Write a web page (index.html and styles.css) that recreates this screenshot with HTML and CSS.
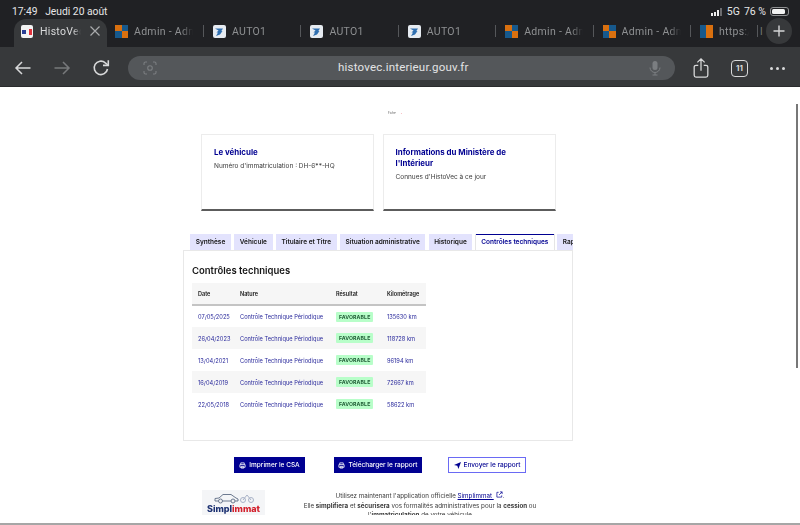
FILE: index.html
```html
<!DOCTYPE html>
<html lang="fr">
<head>
    <meta charset="UTF-8">
    <meta name="viewport" content="width=device-width, initial-scale=1.0">
    <title>HistoVec</title>
    <link rel="stylesheet" href="styles.css">
</head>
<body>
    <!-- Barre d'état -->
    <div class="status-bar">
        <span class="status-time">17:49</span>
        <span class="status-date">Jeudi 20 août</span>
        <div class="status-right">
            <div class="signal"><i></i><i></i><i></i><i class="off"></i></div>
            <span>5G</span>
            <span>76 %</span>
            <div class="battery"><div class="battery-level"></div></div>
        </div>
    </div>

    <!-- Onglets -->
    <div class="tab-strip">
        <div class="browser-tab active">
            <div class="fav fav-fr"><i></i><i></i></div>
            <span class="tab-title">HistoVec</span>
            <svg class="tab-close" width="12" height="12" viewBox="0 0 12 12"><path d="M1.5 1.5l9 9M10.5 1.5l-9 9" stroke="#a9abad" stroke-width="1.2" fill="none"/></svg>
        </div>
        <div class="browser-tab">
            <div class="fav fav-admin"><i></i><i></i><i></i><i></i></div>
            <span class="tab-title">Admin - Adm</span>
        </div>
        <div class="browser-tab sep">
            <div class="fav fav-auto"><svg width="13" height="13" viewBox="0 0 13 13"><path d="M2 3.500h8L8 6.500H5.500L9.500 6 7 9.500 3 11l2-3.500H3.500L5.500 5.500z" fill="#2f6fb0"/></svg></div>
            <span class="tab-title">AUTO1</span>
        </div>
        <div class="browser-tab sep">
            <div class="fav fav-auto"><svg width="13" height="13" viewBox="0 0 13 13"><path d="M2 3.500h8L8 6.500H5.500L9.500 6 7 9.500 3 11l2-3.500H3.500L5.500 5.500z" fill="#2f6fb0"/></svg></div>
            <span class="tab-title">AUTO1</span>
        </div>
        <div class="browser-tab sep">
            <div class="fav fav-auto"><svg width="13" height="13" viewBox="0 0 13 13"><path d="M2 3.500h8L8 6.500H5.500L9.500 6 7 9.500 3 11l2-3.500H3.500L5.500 5.500z" fill="#2f6fb0"/></svg></div>
            <span class="tab-title">AUTO1</span>
        </div>
        <div class="browser-tab sep">
            <div class="fav fav-admin"><i></i><i></i><i></i><i></i></div>
            <span class="tab-title">Admin - Adm</span>
        </div>
        <div class="browser-tab sep">
            <div class="fav fav-admin"><i></i><i></i><i></i><i></i></div>
            <span class="tab-title">Admin - Adm</span>
        </div>
        <div class="browser-tab sep tab-small">
            <div class="fav fav-https"><i></i><i></i></div>
            <span class="tab-title">https:/</span>
        </div>
        <div class="tab-rest"><span>I</span></div>
        <div class="tab-new">
            <svg width="12" height="12" viewBox="0 0 12 12"><path d="M6 .5v11M.5 6h11" stroke="#d4d5d6" stroke-width="1.4"/></svg>
        </div>
    </div>

    <!-- Barre d'outils -->
    <div class="toolbar">
        <svg class="tool-back" width="18" height="16" viewBox="0 0 18 16"><path d="M16.500 8H2M8 2L2 8l6 6" stroke="#d8d9da" stroke-width="1.500" fill="none"/></svg>
        <svg class="tool-forward" width="18" height="16" viewBox="0 0 18 16"><path d="M1.500 8H16M10 2l6 6-6 6" stroke="#77797b" stroke-width="1.500" fill="none"/></svg>
        <svg class="tool-reload" width="18" height="18" viewBox="0 0 18 18"><path d="M15.500 10a6.700 6.700 0 1 1-2.200-6.200L16 6" stroke="#d8d9da" stroke-width="1.600" fill="none"/><path d="M16.300 1.200V6.400H11" stroke="#d8d9da" stroke-width="1.600" fill="none"/></svg>
        <div class="url-bar">
            <svg class="url-lens" width="14" height="14" viewBox="0 0 14 14"><path d="M1 4V2.500A1.500 1.500 0 0 1 2.500 1H4M10 1h1.500A1.500 1.500 0 0 1 13 2.500V4M13 10v1.500a1.500 1.500 0 0 1-1.500 1.500H10M4 13H2.500A1.500 1.500 0 0 1 1 11.500V10" stroke="#7b7e81" stroke-width="1.100" fill="none"/><circle cx="7" cy="7" r="2.300" stroke="#7b7e81" stroke-width="1.100" fill="none"/></svg>
            <span class="url-text">histovec.interieur.gouv.fr</span>
            <svg class="url-mic" width="12" height="16" viewBox="0 0 12 16"><rect x="3.500" y="1" width="5" height="9" rx="2.500" fill="#7b7e81"/><path d="M1 7.500a5 5 0 0 0 10 0M6 12.500V15M3.500 15h5" stroke="#7b7e81" stroke-width="1" fill="none"/></svg>
        </div>
        <svg class="tool-share" width="16" height="20" viewBox="0 0 17 22"><path d="M5.500 8H3a2 2 0 0 0-2 2v9a2 2 0 0 0 2 2h11a2 2 0 0 0 2-2v-9a2 2 0 0 0-2-2h-2.500M8.500 14V1M4.500 4.800L8.500 1l4 3.800" stroke="#d8d9da" stroke-width="1.400" fill="none"/></svg>
        <div class="tool-count">11</div>
        <div class="tool-more"><i></i><i></i><i></i></div>
    </div>

    <!-- Page -->
    <div class="page">
        <div class="page-top"><span class="cut-text">Fiche</span><span class="cut-red">-</span></div>

        <div class="cards">
            <div class="card">
                <h2>Le véhicule</h2>
                <p>Numéro d'immatriculation : DH-6**-HQ</p>
            </div>
            <div class="card">
                <h2>Informations du Ministère de l'Intérieur</h2>
                <p>Connues d'HistoVec à ce jour</p>
            </div>
        </div>

        <div class="panel-wrap">
            <div class="tabs">
                <div class="tab">Synthèse</div>
                <div class="tab">Véhicule</div>
                <div class="tab">Titulaire et Titre</div>
                <div class="tab">Situation administrative</div>
                <div class="tab">Historique</div>
                <div class="tab tab-on">Contrôles techniques</div>
                <div class="tab">Rapport</div>
            </div>
            <div class="panel">
                <h3>Contrôles techniques</h3>
                <table>
                    <thead>
                        <tr><th class="col-date">Date</th><th class="col-nature">Nature</th><th class="col-res">Résultat</th><th>Kilométrage</th></tr>
                    </thead>
                    <tbody>
                        <tr><td>07/05/2025</td><td>Contrôle Technique Périodique</td><td><span class="badge">FAVORABLE</span></td><td>135630 km</td></tr>
                        <tr><td>26/04/2023</td><td>Contrôle Technique Périodique</td><td><span class="badge">FAVORABLE</span></td><td>118728 km</td></tr>
                        <tr><td>13/04/2021</td><td>Contrôle Technique Périodique</td><td><span class="badge">FAVORABLE</span></td><td>96194 km</td></tr>
                        <tr><td>16/04/2019</td><td>Contrôle Technique Périodique</td><td><span class="badge">FAVORABLE</span></td><td>72667 km</td></tr>
                        <tr><td>22/05/2018</td><td>Contrôle Technique Périodique</td><td><span class="badge">FAVORABLE</span></td><td>58622 km</td></tr>
                    </tbody>
                </table>
            </div>
        </div>

        <div class="actions">
            <div class="btn btn-imprimer"><svg width="7" height="7" viewBox="0 0 8 8"><path d="M2 3V1h4v2M1 3h6v3H1zM2.500 5h3v2h-3z" fill="none" stroke="#fff" stroke-width=".9"/></svg>Imprimer le CSA</div>
            <div class="btn btn-rapport"><svg width="7" height="7" viewBox="0 0 8 8"><path d="M2 3V1h4v2M1 3h6v3H1zM2.500 5h3v2h-3z" fill="none" stroke="#fff" stroke-width=".9"/></svg>Télécharger le rapport</div>
            <div class="btn btn-line"><svg width="7" height="7" viewBox="0 0 8 8"><path d="M0 3.500L8 0 5 8 3.800 4.300z" fill="#000091"/></svg>Envoyer le rapport</div>
        </div>

        <div class="promo">
            <div class="promo-logo">
                <svg width="40" height="12" viewBox="0 0 40 12"><path d="M1 9V6.500L5 6l4-3.500h8L22 6l2 1v2z" fill="none" stroke="#6d7a90" stroke-width="1"/><circle cx="6.500" cy="9" r="2" fill="#f0f0f2" stroke="#6d7a90"/><circle cx="19" cy="9" r="2" fill="#f0f0f2" stroke="#6d7a90"/><circle cx="29" cy="8" r="2.500" fill="none" stroke="#a9b3c8"/><circle cx="37" cy="8" r="2.500" fill="none" stroke="#a9b3c8"/><path d="M29 8l4-5 4 5" fill="none" stroke="#a9b3c8"/></svg>
                <div class="promo-name">Simpl<span>immat</span></div>
            </div>
            <div class="promo-text">
                <p>Utilisez maintenant l'application officielle <a>Simplimmat <svg width="7" height="7" viewBox="0 0 8 8"><path d="M3 1.500H1v5.500h5.500V5M4.500 1H7v2.500M7 1L3.500 4.500" fill="none" stroke="#000091" stroke-width=".8"/></svg></a>.</p>
                <p>Elle <b>simplifiera</b> et <b>sécurisera</b> vos formalités administratives pour la <b>cession</b> ou</p>
                <p>l'<b>immatriculation</b> de votre véhicule</p>
            </div>
        </div>

        <div class="scroll-thumb"></div>
        <div class="page-edge"></div>
    </div>
</body>
</html>
```

FILE: styles.css
```css
* {
    margin: 0;
    padding: 0;
    box-sizing: border-box;
}

html, body {
    width: 800px;
    height: 525px;
    overflow: hidden;
}

body {
    font-family: Inter, "Liberation Sans", sans-serif;
    background: #fff;
    display: flex;
    flex-direction: column;
}

/* Barre d'état */
.status-bar {
    height: 19px;
    flex: none;
    background: #202124;
    color: #e6e6e7;
    font-family: Roboto, sans-serif;
    font-size: 10.300px;
    display: flex;
    align-items: flex-end;
    padding: 0 11px 0 12px;
    line-height: 15px;
}

.status-date {
    margin-left: 7.500px;
}

.status-right {
    margin-left: auto;
    display: flex;
    align-items: center;
    gap: 4px;
    height: 15px;
    font-size: 10.500px;
}

.signal {
    display: flex;
    align-items: flex-end;
    gap: 1px;
    height: 8px;
    margin-right: 1px;
}

.signal i {
    width: 2px;
    background: #eee;
}

.signal i:nth-child(1) { height: 3px; }
.signal i:nth-child(2) { height: 4px; }
.signal i:nth-child(3) { height: 6px; }
.signal i:nth-child(4) { height: 8px; }
.signal i.off { background: #6b6c6f; }

.battery {
    width: 19px;
    height: 9px;
    border: 1px solid #8f9092;
    border-radius: 3px;
    padding: 1px;
}

.battery-level {
    width: 13px;
    height: 100%;
    background: #f2f2f2;
    border-radius: 1.500px;
}

/* Onglets */
.tab-strip {
    height: 28px;
    flex: none;
    background: #202124;
    display: flex;
    align-items: center;
    padding: 0 0 4px 14px;
    position: relative;
}

.browser-tab {
    width: 97.400px;
    height: 24px;
    flex: none;
    display: flex;
    align-items: center;
    padding-left: 10px;
    color: #8e9092;
    font-family: Roboto, sans-serif;
    font-size: 10.500px;
    letter-spacing: .3px;
    position: relative;
}

.browser-tab.sep::before {
    content: "";
    position: absolute;
    left: 0;
    top: 6px;
    height: 12px;
    width: 1px;
    background: #55575a;
}

.browser-tab.active {
    width: 93px;
    height: 28px;
    margin-bottom: -4px;
    padding: 0 0 4px 7px;
    background: #37393b;
    border-radius: 12px 12px 0 0;
    color: #d9dadb;
}

.browser-tab.active + .browser-tab {
    width: 96px;
    padding-left: 8px;
}

.tab-small {
    width: 67px;
}

.tab-title {
    margin-left: 6px;
    width: 59px;
    overflow: hidden;
    white-space: nowrap;
    -webkit-mask-image: linear-gradient(90deg, #000 80%, transparent);
    mask-image: linear-gradient(90deg, #000 80%, transparent);
}

.active .tab-title {
    margin-left: 7px;
    width: 41px;
}

.tab-small .tab-title {
    width: 30px;
}

.tab-close {
    margin-left: 8px;
}

.fav {
    width: 13px;
    height: 13px;
    flex: none;
    display: grid;
}

.fav-fr {
    width: 12px;
    background: #f3f3f3;
    border-radius: 2px;
    position: relative;
}

.fav-fr i:first-child {
    position: absolute;
    left: 1px;
    top: 5px;
    width: 4px;
    height: 4px;
    background: #2a3f95;
}

.fav-fr i:last-child {
    position: absolute;
    right: 1px;
    top: 4px;
    width: 3px;
    height: 6px;
    background: #e1323c;
}

.fav-admin {
    grid-template-columns: 1fr 1fr;
    grid-template-rows: 1fr 1fr;
}

.fav-admin i:nth-child(1), .fav-admin i:nth-child(4) { background: #d9700f; }
.fav-admin i:nth-child(2), .fav-admin i:nth-child(3) { background: #17598c; }

.fav-auto {
    background: #e6ebf1;
    border-radius: 2px;
}

.fav-https {
    grid-template-columns: 1fr 1fr;
}

.fav-https i:first-child { background: #17598c; }
.fav-https i:last-child { background: #d9700f; }

.tab-rest {
    width: 20px;
    color: #77797b;
    font-size: 10px;
    border-left: 1px solid #55575a;
    padding-left: 2px;
    height: 12px;
    line-height: 12px;
}

.tab-new {
    position: absolute;
    left: 766px;
    top: -1px;
    width: 26px;
    height: 26px;
    border-radius: 50%;
    background: #37393b;
    display: flex;
    align-items: center;
    justify-content: center;
}

/* Barre d'outils */
.toolbar {
    height: 40px;
    flex: none;
    background: #37393b;
    display: flex;
    align-items: center;
    padding: 3px 0 0 14px;
    border-bottom: 1px solid #2a2b2d;
}

.tool-forward {
    margin-left: 21px;
}

.tool-reload {
    margin-left: 21px;
}

.url-bar {
    width: 547px;
    height: 24px;
    margin-left: 18px;
    border-radius: 12px;
    background: #54575a;
    display: flex;
    align-items: center;
    padding: 0 14px 0 15px;
    color: #e3e4e5;
    font-family: Roboto, sans-serif;
    font-size: 11.500px;
}

.url-text {
    margin-left: 181px;
    letter-spacing: .2px;
    position: relative;
    top: -1px;
}

.url-mic {
    margin-left: auto;
}

.tool-share {
    margin-left: 18px;
}

.tool-count {
    width: 17px;
    height: 17px;
    margin-left: 22px;
    border: 1.500px solid #d8d9da;
    border-radius: 4px;
    color: #d8d9da;
    font-size: 8px;
    font-weight: 700;
    display: flex;
    align-items: center;
    justify-content: center;
}

.tool-more {
    display: flex;
    gap: 3px;
    margin-left: 22px;
}

.tool-more i {
    width: 3px;
    height: 3px;
    border-radius: 50%;
    background: #d8d9da;
}

/* Page */
.page {
    flex: 1;
    min-height: 0;
    background: #fff;
    position: relative;
    overflow: hidden;
    display: flex;
    flex-direction: column;
    padding-top: 25px;
    color: #161616;
    filter: blur(.3px);
}

.page-top {
    height: 22px;
    margin-left: 388px;
    font-size: 3px;
    line-height: 3px;
    color: #555;
}

.cut-red {
    color: #e1000f;
    margin-left: 5px;
}

.cards {
    display: flex;
    gap: 8.500px;
    margin-left: 201px;
}

.card {
    width: 173px;
    height: 77px;
    border: 1px solid #ececec;
    border-bottom: 2px solid #5c5c5c;
    padding: 12px 12px 0;
}

.card h2 {
    font-size: 7.900px;
    line-height: 11px;
    font-weight: 700;
    color: #000091;
    margin-bottom: 3px;
}

.card p {
    font-size: 6.500px;
    line-height: 10px;
    color: #3a3a3a;
}

.panel-wrap {
    width: 390px;
    margin: 23px 0 0 183px;
}

.tabs {
    display: flex;
    gap: 3.100px;
    padding-left: 7px;
    height: 16px;
    overflow: hidden;
}

.tab {
    flex: none;
    height: 16px;
    padding: 0 5.700px;
    background: #e3e3fd;
    font-size: 6.500px;
    font-weight: 600;
    line-height: 16px;
    color: #161616;
    white-space: nowrap;
}

.tab-on {
    background: #fff;
    color: #000091;
    border-top: 1px solid #000091;
    line-height: 15px;
    box-shadow: 1px 0 0 #e5e5e5, -1px 0 0 #e5e5e5;
}

.panel {
    height: 191px;
    border: 1px solid #e8e8e8;
    padding: 13px 8px 0;
}

.panel h3 {
    font-size: 9.500px;
    line-height: 13px;
    font-weight: 600;
    margin-bottom: 6px;
}

table {
    border-collapse: collapse;
    width: 234px;
    table-layout: fixed;
    font-size: 5.700px;
}

th {
    height: 22px;
    padding-left: 6px;
    background: #f6f6f6;
    border-bottom: 2px solid #c4c4c4;
    text-align: left;
    font-weight: 600;
    font-size: 5.500px;
}

.col-date { width: 43px; }
.col-nature { width: 101px; }
.col-res { width: 51px; }

td {
    height: 22px;
    padding-left: 6px;
    color: #2a2a9c;
    white-space: nowrap;
}

tbody tr:nth-child(even) td {
    background: #f6f6f6;
}

th:nth-child(3), th:nth-child(4), td:nth-child(3), td:nth-child(4) {
    padding-left: 0;
}

td:nth-child(2), th:nth-child(2) {
    padding-left: 5px;
}

.badge {
    display: inline-block;
    background: #b8fec9;
    color: #1f5c35;
    font-size: 5.200px;
    font-weight: 700;
    line-height: 10px;
    padding: 0 3px;
    border-radius: 1px;
    letter-spacing: .1px;
}

/* Boutons */
.actions {
    display: flex;
    margin: 16px 0 0 234px;
    height: 16px;
}

.btn {
    height: 16px;
    display: flex;
    align-items: center;
    justify-content: center;
    gap: 3px;
    background: #000091;
    color: #fff;
    font-size: 6.500px;
    font-weight: 500;
}

.btn-imprimer { width: 71px; }
.btn-rapport { width: 88px; margin-left: 29px; }

.btn-line {
    width: 78px;
    margin-left: 26px;
    background: #fff;
    color: #000091;
    border: 1px solid #6a6af4;
}

/* Simplimmat */
.promo {
    display: flex;
    margin: 17px 0 0 202px;
    height: 25px;
    overflow: hidden;
}

.promo-logo {
    width: 63px;
    height: 25px;
    background: #f4f5f7;
    display: flex;
    flex-direction: column;
    align-items: center;
}

.promo-logo svg {
    margin-top: 2px;
    flex: none;
}

.promo-name {
    font-size: 9px;
    line-height: 10px;
    font-weight: 800;
    color: #1d3272;
}

.promo-name span {
    color: #d3202c;
}

.promo-text {
    width: 234px;
    margin-left: 38px;
    text-align: center;
    font-size: 6.250px;
    line-height: 9.500px;
    color: #3a3a3a;
    padding-top: 1px;
}

.promo-text p {
    white-space: nowrap;
}

.promo-text a {
    color: #000091;
    text-decoration: underline;
}

.promo-text svg {
    margin-left: 2px;
}

.scroll-thumb {
    position: absolute;
    left: 796px;
    top: 17px;
    width: 2px;
    height: 264px;
    background: #777;
}

.page-edge {
    position: absolute;
    left: 0;
    bottom: 0;
    width: 100%;
    height: 2px;
    background: #a6a6a6;
}
```
